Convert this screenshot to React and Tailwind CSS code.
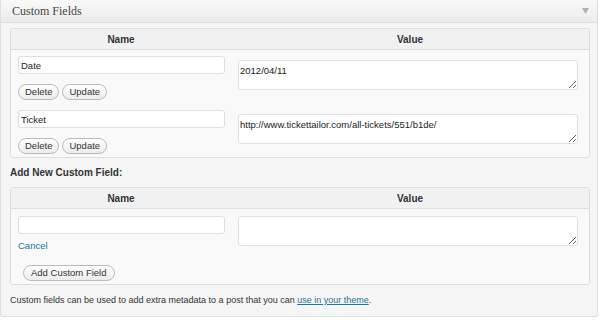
function Btn({ children, className = "" }) {
  return (
    <button
      type="button"
      className={`h-[16px] rounded-[11px] border border-[#bbbbbb] bg-gradient-to-b from-white to-[#ececec] px-[6px] text-[9.5px] leading-[14px] text-[#333] ${className}`}
    >
      {children}
    </button>
  );
}

function TextInput({ value }) {
  return (
    <input
      type="text"
      defaultValue={value}
      className="block h-[18px] w-[207px] rounded-[3px] border border-[#dfdfdf] bg-white px-[2px] text-[9.5px] text-[#222] outline-none"
    />
  );
}

function Area({ value }) {
  return (
    <textarea
      defaultValue={value}
      className="block h-[30px] w-[340px] rounded-[3px] border border-[#dfdfdf] bg-white px-[1px] pt-[4px] text-[9.5px] leading-[12px] text-[#222] outline-none"
    />
  );
}

function Header() {
  return (
    <div className="flex h-[21px] border-b border-[#dfdfdf] bg-[#f1f1f1] text-[10px] font-bold text-[#333]">
      <div className="flex w-[220px] items-center justify-center">Name</div>
      <div className="flex flex-1 items-center justify-center">Value</div>
    </div>
  );
}

function Row({ name, value, last }) {
  return (
    <div className={`flex ${last ? "pb-[3px]" : "pb-[4px]"}`}>
      <div className="w-[220px] pl-[7px] pt-[6px]">
        <TextInput value={name} />
        <div className="mt-[10px] flex gap-[3px]">
          <Btn>Delete</Btn>
          <Btn>Update</Btn>
        </div>
      </div>
      <div className="flex-1 pl-[7px] pt-[10px]">
        <Area value={value} />
      </div>
    </div>
  );
}

export default function App() {
  return (
    <div className="h-[320px] w-[600px] bg-white font-['Liberation_Sans',Arial,sans-serif] text-[#333]">
      <div className="flex h-[317px] w-[598px] flex-col rounded-b-[3px] border border-t-0 border-[#dfdfdf] bg-[#f5f5f5]">
        <div className="flex h-[23px] items-center justify-between border-b border-[#dfdfdf] bg-gradient-to-b from-[#f9f9f9] to-[#ececec] pl-[11px] pr-[8px]">
          <span className="font-['Liberation_Serif',serif] text-[12px] text-[#464646]">
            Custom Fields
          </span>
          <svg width="7" height="6" viewBox="0 0 7 6">
            <path d="M0 0 L7 0 L3.5 6 Z" fill="#b0b0b0" />
          </svg>
        </div>
        <div className="pl-[9px] pr-[7px] pt-[5px]">
          <div className="overflow-hidden rounded-[3px] border border-[#dfdfdf] bg-[#f9f9f9]">
            <Header />
            <Row name="Date" value="2012/04/11" />
            <Row name="Ticket" value="http://www.tickettailor.com/all-tickets/551/b1de/" last />
          </div>
          <div className="flex h-[29px] items-center text-[10px] font-bold text-[#333]">
            Add New Custom Field:
          </div>
          <div className="overflow-hidden rounded-[3px] border border-[#dfdfdf] bg-[#f9f9f9]">
            <Header />
            <div className="flex h-[75px]">
              <div className="w-[220px] pl-[7px] pt-[7px]">
                <TextInput value="" />
                <a className="mt-[5px] block text-[9.5px] leading-[14px] text-[#21759b]">Cancel</a>
                <div className="mt-[6px] pl-[5px]">
                  <Btn className="px-[7px]">Add Custom Field</Btn>
                </div>
              </div>
              <div className="flex-1 pl-[7px] pt-[7px]">
                <Area value="" />
              </div>
            </div>
          </div>
          <p className="mt-[8px] text-[9px] leading-[14px] text-[#333]">
            Custom fields can be used to add extra metadata to a post that you can{" "}
            <a className="text-[#21759b] underline">use in your theme</a>.
          </p>
        </div>
      </div>
    </div>
  );
}
